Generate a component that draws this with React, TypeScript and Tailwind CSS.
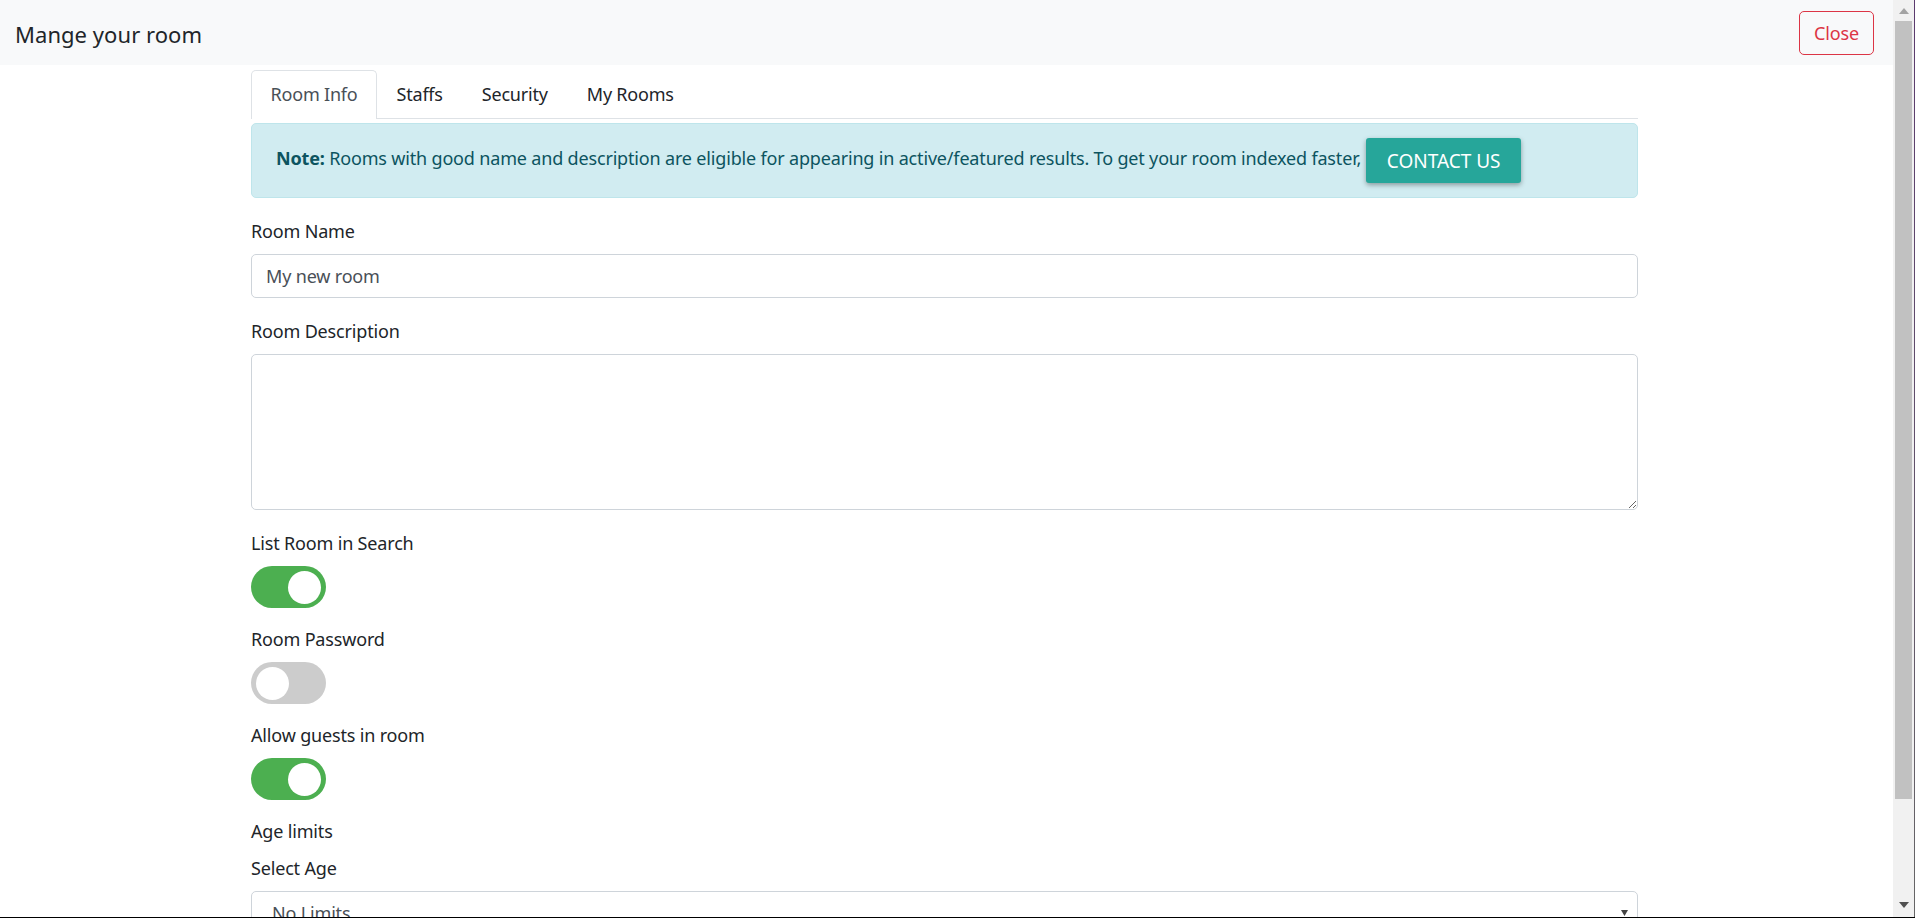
const font = "font-['Noto_Sans','Open_Sans',sans-serif]";

function Toggle({ on }: { on: boolean }) {
  return (
    <div
      className={`mb-2 flex h-[42px] w-[75px] items-center rounded-full px-[5px] ${
        on ? "justify-end bg-[#4caf50]" : "justify-start bg-[#cccccc]"
      }`}
    >
      <div className="h-[33px] w-[33px] rounded-full bg-white" />
    </div>
  );
}

function Label({ text, className }: { text: string; className?: string }) {
  return (
    <div className={`flex h-[30px] items-center text-[18px] tracking-[-0.17px] text-[#212529] ${className ?? ""}`}>
      {text}
    </div>
  );
}

function Scrollbar() {
  return (
    <div className="flex w-[21px] shrink-0 flex-col items-center bg-[#f1f1f1]">
      <div className="flex h-[21px] w-full items-center justify-center">
        <svg width="10" height="6" viewBox="0 0 10 6">
          <path d="M5 0 L10 6 L0 6 Z" fill="#a3a3a3" />
        </svg>
      </div>
      <div className="h-[778px] w-[17px] bg-[#c1c1c1]" />
      <div className="flex flex-1 items-end pb-[9px]">
        <svg width="10" height="6" viewBox="0 0 10 6">
          <path d="M0 0 L10 0 L5 6 Z" fill="#505050" />
        </svg>
      </div>
    </div>
  );
}

export default function App() {
  return (
    <div className={`flex h-[918px] w-full flex-col overflow-hidden bg-white ${font}`}>
      <div className="flex h-[917px] w-[1915px]">
        <div className="min-w-0 flex-1 overflow-hidden">
          <div className="flex h-[65px] items-center justify-between bg-[#f8f9fa] pl-[15px] pr-[19px]">
            <h1 className="pt-[3px] text-[22px] font-normal tracking-[0.05px] text-[#212529]">Mange your room</h1>
            <button className="h-[44px] rounded-[5px] border border-[#dc3545] px-[14px] pt-px text-[18px] tracking-[-0.14px] text-[#dc3545]">
              Close
            </button>
          </div>

          <div className="ml-[251px] w-[1387px]">
            <div className="mt-[5px] flex h-[49px] border-b border-[#dee2e6] text-[18px] tracking-[-0.2px] text-[#212529]">
              <div className="flex h-[49px] w-[126px] items-center justify-center rounded-t-[5px] border border-b-0 border-[#dee2e6] bg-white pb-[2px] text-[#495057]">
                Room Info
              </div>
              <div className="flex items-center px-[19.5px]">Staffs</div>
              <div className="flex items-center px-[19.5px]">Security</div>
              <div className="flex items-center px-[19.5px]">My Rooms</div>
            </div>

            <div className="mb-[18px] mt-1 flex h-[75px] items-center rounded-[5px] border border-[#bee5eb] bg-[#d1ecf1] pl-6 text-[18px] text-[#0c5460]">
              <span className="pb-[4px] tracking-[-0.17px]">
                <b>Note:</b> Rooms with good name and description are eligible for appearing in active/featured results. To get your room indexed faster,
              </span>
              <button className="ml-[5px] h-[45px] w-[155px] rounded-[3px] bg-[#26a69a] pt-[2px] text-[19px] text-white shadow-[0_2px_5px_rgba(0,0,0,0.35)]">
                CONTACT US
              </button>
            </div>

            <Label text="Room Name" className="mb-2" />
            <div className="mb-[19px] flex h-[44px] items-center rounded-[5px] border border-[#ced4da] pl-[14px] text-[18px] tracking-[-0.17px] text-[#495057]">
              My new room
            </div>

            <Label text="Room Description" className="mb-[7px] pb-px" />
            <textarea className="mb-[18px] block h-[156px] w-full rounded-[5px] border border-[#ced4da]" />

            <Label text="List Room in Search" className="mb-2" />
            <Toggle on />
            <div className="h-2" />
            <Label text="Room Password" className="mb-2" />
            <Toggle on={false} />
            <div className="h-2" />
            <Label text="Allow guests in room" className="mb-2" />
            <Toggle on />
            <div className="h-2" />
            <Label text="Age limits" className="mb-[7px]" />
            <Label text="Select Age" className="mb-2" />
            <div className="relative flex h-[44px] items-center rounded-[5px] border border-[#ced4da] pl-5 text-[18px] tracking-[-0.17px] text-[#495057]">
              No Limits
              <svg className="absolute right-[9px] top-[18px]" width="7" height="6" viewBox="0 0 7 6">
                <path d="M0 0 L7 0 L3.5 6 Z" fill="#444" />
              </svg>
            </div>
          </div>
        </div>
        <Scrollbar />
        <div className="w-px shrink-0 bg-gradient-to-b from-[#5b3a6e] to-[#666666]" />
      </div>
      <div className="h-px w-[1915px] bg-black" />
    </div>
  );
}
